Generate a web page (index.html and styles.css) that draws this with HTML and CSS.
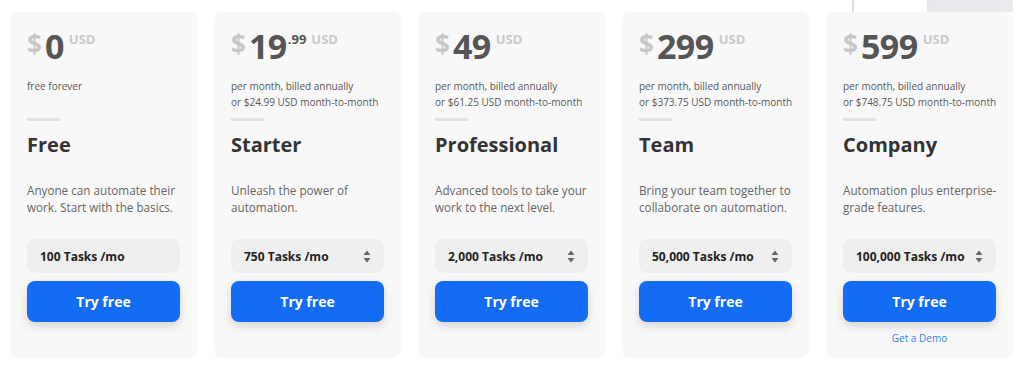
FILE: index.html
```html
<!DOCTYPE html>
<html>
<head>
    <title>Pricing</title>
    <link rel="stylesheet" href="styles.css">
</head>
<body>
    <div class="page">
        <!-- bits of the section above, peeking out behind the cards -->
        <div class="edge-line"></div>
        <div class="edge-block"></div>

        <div class="plans">
            <div class="plan">
                <div class="price">
                    <span class="currency">$</span>
                    <span class="amount">0</span>
                    <span class="unit">USD</span>
                </div>
                <div class="note">free forever</div>
                <div class="rule"></div>
                <h2>Free</h2>
                <p class="desc">Anyone can automate their<br>work. Start with the basics.</p>
                <div class="tasks">
                    <span>100 Tasks /mo</span>
                </div>
                <button class="try-btn">Try free</button>
            </div>

            <div class="plan">
                <div class="price">
                    <span class="currency">$</span>
                    <span class="amount">19</span>
                    <span class="cents">.99</span>
                    <span class="unit">USD</span>
                </div>
                <div class="note">per month, billed annually<br>or $24.99 USD month-to-month</div>
                <div class="rule"></div>
                <h2>Starter</h2>
                <p class="desc">Unleash the power of<br>automation.</p>
                <div class="tasks">
                    <span>750 Tasks /mo</span>
                    <svg class="arrows" width="8" height="13" viewBox="0 0 8 13"><path d="M4 0.5 L7.5 5 H0.5 Z M4 12.5 L7.5 8 H0.5 Z"/></svg>
                </div>
                <button class="try-btn">Try free</button>
            </div>

            <div class="plan">
                <div class="price">
                    <span class="currency">$</span>
                    <span class="amount">49</span>
                    <span class="unit">USD</span>
                </div>
                <div class="note">per month, billed annually<br>or $61.25 USD month-to-month</div>
                <div class="rule"></div>
                <h2>Professional</h2>
                <p class="desc">Advanced tools to take your<br>work to the next level.</p>
                <div class="tasks">
                    <span>2,000 Tasks /mo</span>
                    <svg class="arrows" width="8" height="13" viewBox="0 0 8 13"><path d="M4 0.5 L7.5 5 H0.5 Z M4 12.5 L7.5 8 H0.5 Z"/></svg>
                </div>
                <button class="try-btn">Try free</button>
            </div>

            <div class="plan">
                <div class="price">
                    <span class="currency">$</span>
                    <span class="amount">299</span>
                    <span class="unit">USD</span>
                </div>
                <div class="note">per month, billed annually<br>or $373.75 USD month-to-month</div>
                <div class="rule"></div>
                <h2>Team</h2>
                <p class="desc">Bring your team together to<br>collaborate on automation.</p>
                <div class="tasks">
                    <span>50,000 Tasks /mo</span>
                    <svg class="arrows" width="8" height="13" viewBox="0 0 8 13"><path d="M4 0.5 L7.5 5 H0.5 Z M4 12.5 L7.5 8 H0.5 Z"/></svg>
                </div>
                <button class="try-btn">Try free</button>
            </div>

            <div class="plan">
                <div class="price">
                    <span class="currency">$</span>
                    <span class="amount">599</span>
                    <span class="unit">USD</span>
                </div>
                <div class="note">per month, billed annually<br>or $748.75 USD month-to-month</div>
                <div class="rule"></div>
                <h2>Company</h2>
                <p class="desc">Automation plus enterprise-<br>grade features.</p>
                <div class="tasks">
                    <span>100,000 Tasks /mo</span>
                    <svg class="arrows" width="8" height="13" viewBox="0 0 8 13"><path d="M4 0.5 L7.5 5 H0.5 Z M4 12.5 L7.5 8 H0.5 Z"/></svg>
                </div>
                <button class="try-btn">Try free</button>
                <a class="demo-link" href="#">Get a Demo</a>
            </div>
        </div>
    </div>
</body>
</html>
```

FILE: styles.css
```css
:root {
    --card-bg: #f8f8f8;
    --blue: #146cf5;
    --text-dark: #333333;
    --text-mid: #595959;
    --price-light: #c8c8c8;
}

body {
    margin: 0;
    font-family: 'Open Sans', 'Noto Sans', sans-serif;
    background: #ffffff;
    color: var(--text-dark);
}

.page {
    position: relative;
    padding: 12px 10px;
}

.edge-line {
    position: absolute;
    top: 0;
    left: 852px;
    width: 2px;
    height: 12px;
    background: #dedede;
}

.edge-block {
    position: absolute;
    top: 0;
    left: 927px;
    width: 86px;
    height: 12px;
    background: linear-gradient(90deg, #e6e8eb, #e9ebee);
}

.plans {
    display: grid;
    grid-template-columns: repeat(5, 187px);
    gap: 17px;
}

.plan {
    position: relative;
    background: var(--card-bg);
    border-radius: 8px;
    padding: 17px 17px 12px;
    display: flex;
    flex-direction: column;
}

.price {
    display: flex;
    align-items: flex-start;
    height: 34px;
    font-weight: 700;
    line-height: 1;
}

.currency {
    font-size: 26px;
    color: var(--price-light);
    margin-top: 2px;
    margin-right: 3px;
}

.amount {
    font-size: 34px;
    color: #555555;
    letter-spacing: -0.5px;
}

.cents {
    font-size: 13px;
    color: #555555;
    margin-top: 4px;
    margin-left: 1px;
}

.unit {
    font-size: 13px;
    color: var(--price-light);
    margin-top: 4px;
    margin-left: 5px;
}

.note {
    margin-top: 15px;
    font-size: 10px;
    line-height: 16px;
    min-height: 32px;
    white-space: nowrap;
    color: var(--text-mid);
}

.rule {
    margin-top: 8px;
    width: 33px;
    height: 3px;
    background: #e2e2e2;
}

.plan h2 {
    margin: 12px 0 0;
    font-size: 20px;
    line-height: 24px;
    font-weight: 700;
    color: var(--text-dark);
}

.desc {
    margin: 25px 0 0;
    font-size: 11.7px;
    line-height: 17px;
    min-height: 34px;
    white-space: nowrap;
    color: #666666;
}

.tasks {
    margin-top: 23px;
    height: 34px;
    border-radius: 8px;
    background: #efefef;
    display: flex;
    align-items: center;
    justify-content: space-between;
    padding: 0 13px;
    font-size: 12px;
    font-weight: 700;
    color: #222222;
}

.arrows {
    fill: #666666;
}

.try-btn {
    margin-top: 8px;
    height: 41px;
    border: none;
    border-radius: 8px;
    background: var(--blue);
    color: #ffffff;
    font-family: inherit;
    font-size: 14px;
    font-weight: 700;
    box-shadow: 0 4px 10px rgba(0, 0, 0, 0.15);
    cursor: pointer;
}

.demo-link {
    margin-top: 8px;
    text-align: center;
    font-size: 10px;
    line-height: 16px;
    color: #3a7ef0;
    text-decoration: none;
}
```
